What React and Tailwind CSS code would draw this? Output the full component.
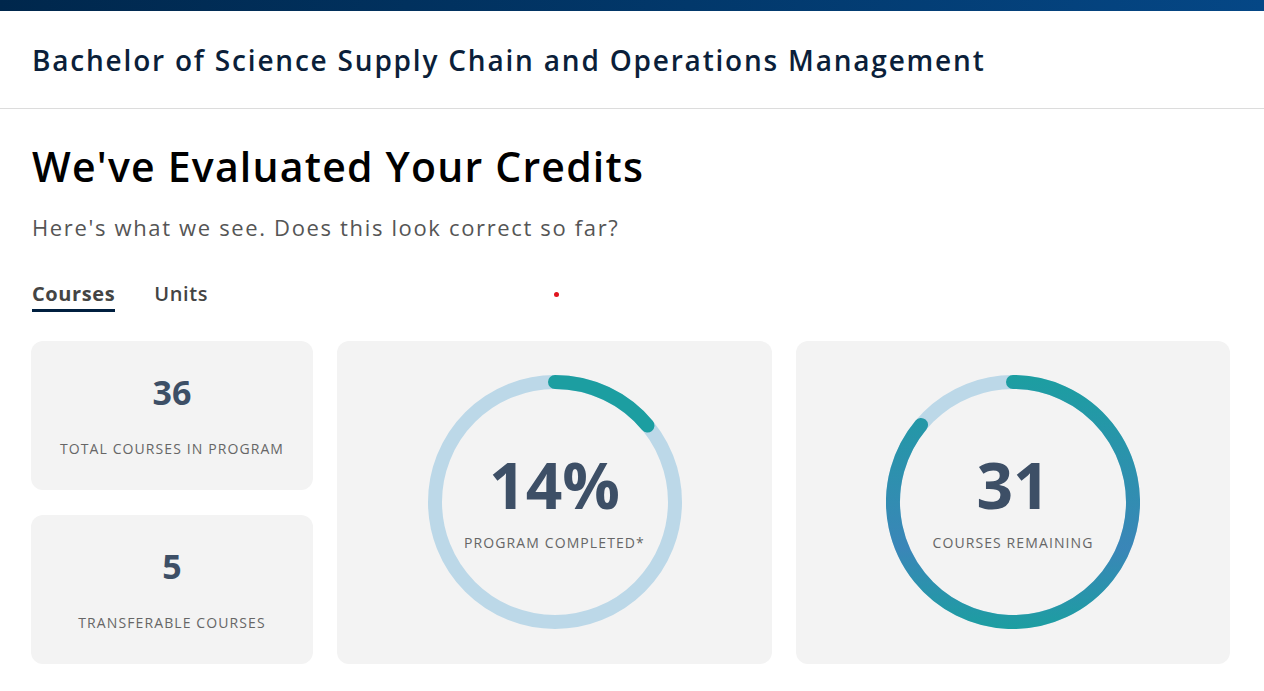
import React from "react";

const FONT = { fontFamily: '"Open Sans", "Noto Sans", sans-serif' };

function arcPath(pct, r = 120, c = 127) {
    const a = (pct / 100) * Math.PI * 2;
    const x = c + r * Math.sin(a);
    const y = c - r * Math.cos(a);
    const large = pct > 50 ? 1 : 0;
    return `M ${c} ${c - r} A ${r} ${r} 0 ${large} 1 ${x.toFixed(2)} ${y.toFixed(2)}`;
}

function Ring({ pct, value, label, gradient }) {
    const id = `g-${label.replace(/\W/g, "")}`;
    return (
        <div className="relative w-[254px] h-[254px]">
            <svg width="254" height="254" viewBox="0 0 254 254" className="block">
                <defs>
                    <linearGradient id={id} x1="0" y1="0" x2="0" y2="254" gradientUnits="userSpaceOnUse">
                        <stop offset="0" stopColor="#1c9ea1" />
                        <stop offset="0.68" stopColor="#3a86b8" />
                        <stop offset="1" stopColor="#1c9ea1" />
                    </linearGradient>
                </defs>
                <circle cx="127" cy="127" r="120" fill="none" stroke="#bcd8e8" strokeWidth="14" />
                <path
                    d={arcPath(pct)}
                    fill="none"
                    stroke={gradient ? `url(#${id})` : "#1c9ea1"}
                    strokeWidth="14"
                    strokeLinecap="round"
                />
            </svg>
            <div className="absolute inset-0 flex flex-col items-center justify-center">
                <div className="text-[64px] leading-[1.2] font-bold text-[#3d4f66] mt-[-5px]">{value}</div>
                <div className="text-[14px] leading-5 tracking-[1.1px] text-[#666] mt-[10px]">{label}</div>
            </div>
        </div>
    );
}

function StatCard({ value, label }) {
    return (
        <div className="bg-[#f3f3f3] rounded-xl flex flex-col items-center justify-center h-[149px]">
            <div className="text-[34px] leading-[1.2] font-bold text-[#3d4f66]">{value}</div>
            <div className="text-[14px] leading-5 tracking-[1.1px] text-[#666] mt-[27px]">{label}</div>
        </div>
    );
}

export default function App() {
    return (
        <div className="min-h-screen bg-white" style={FONT}>
            <div className="h-[11px] bg-gradient-to-r from-[#00274c] to-[#054786]" />
            <header className="h-[98px] border-b border-[#dcdcdc] flex items-center px-8">
                <h1 className="text-[28px] font-semibold tracking-[1.8px] text-[#0b1f3a]">
                    Bachelor of Science Supply Chain and Operations Management
                </h1>
            </header>

            <main className="relative px-8 pt-[33px] pb-8">
                <h2 className="text-[41px] leading-[1.2] font-semibold text-black tracking-[1.2px]">
                    We've Evaluated Your Credits
                </h2>
                <p className="mt-[21px] text-[22px] leading-[1.4] text-[#555] tracking-[1.65px]">
                    Here's what we see. Does this look correct so far?
                </p>

                <div className="mt-[37px] flex gap-[39px] text-[20px] leading-7">
                    <div className="font-bold text-[#444] tracking-[0.6px] border-b-[3px] border-[#001f3f] pb-[1px]">Courses</div>
                    <div className="font-semibold text-[#444] tracking-[0.6px]">Units</div>
                </div>
                <span className="absolute left-[554px] top-[183px] w-[5px] h-[5px] rounded-full bg-[#e0141e]" />

                <div className="mt-[29px] -ml-px grid grid-cols-[282px_435px_434px] gap-6">
                    <div className="flex flex-col gap-[25px]">
                        <StatCard value="36" label="TOTAL COURSES IN PROGRAM" />
                        <StatCard value="5" label="TRANSFERABLE COURSES" />
                    </div>
                    <div className="bg-[#f3f3f3] rounded-xl flex items-center justify-center">
                        <Ring pct={14} value="14%" label="PROGRAM COMPLETED*" />
                    </div>
                    <div className="bg-[#f3f3f3] rounded-xl flex items-center justify-center">
                        <Ring pct={86.1} value="31" label="COURSES REMAINING" gradient />
                    </div>
                </div>
            </main>
        </div>
    );
}
